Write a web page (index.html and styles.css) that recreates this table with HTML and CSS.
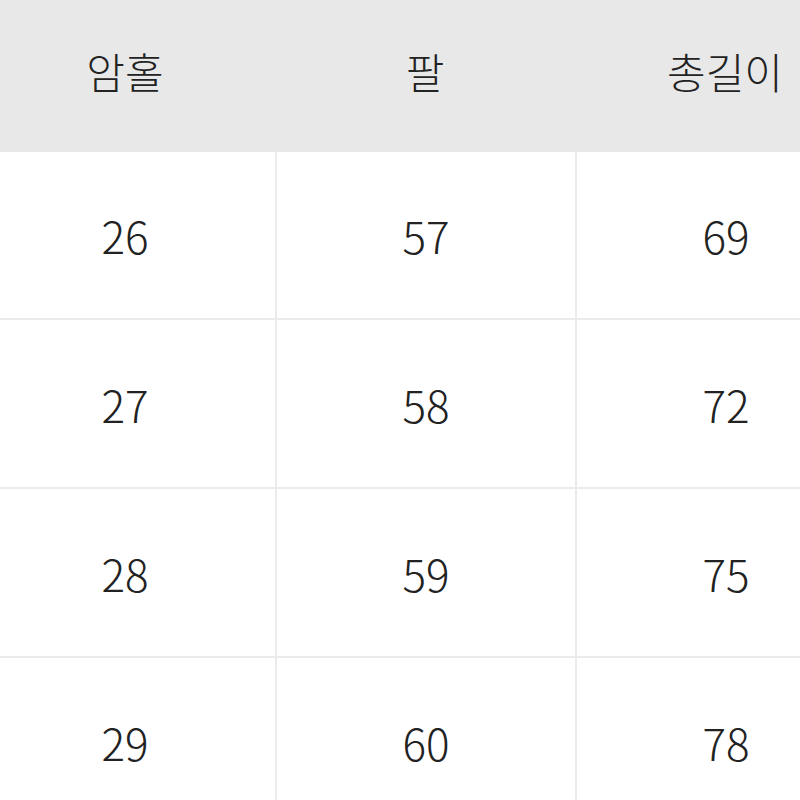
FILE: index.html
```html
<!DOCTYPE html>
<html lang="ko">
<head>
<meta charset="utf-8">
<link rel="stylesheet" href="styles.css">
</head>
<body>
<div class="frame">
<div class="table">
  <div class="row head">
    <div class="cell">암홀</div>
    <div class="cell">팔</div>
    <div class="cell">총길이</div>
  </div>
  <div class="row">
    <div class="cell">26</div>
    <div class="cell">57</div>
    <div class="cell">69</div>
  </div>
  <div class="row">
    <div class="cell">27</div>
    <div class="cell">58</div>
    <div class="cell">72</div>
  </div>
  <div class="row">
    <div class="cell">28</div>
    <div class="cell">59</div>
    <div class="cell">75</div>
  </div>
  <div class="row">
    <div class="cell">29</div>
    <div class="cell">60</div>
    <div class="cell">78</div>
  </div>
</div>
</div>
</body>
</html>
```

FILE: styles.css
```css
html, body {
  margin: 0;
  padding: 0;
  background: #ffffff;
}
.frame {
  width: 800px;
  height: 800px;
  overflow: hidden;
}
.table {
  margin-left: -25px;
  width: 900px;
  font-family: "Noto Sans CJK KR", "Noto Sans", sans-serif;
  color: #222222;
}
.row {
  display: grid;
  grid-template-columns: 300px 300px 300px;
  height: 169px;
  border-top: 2px solid #ebebeb;
  box-sizing: border-box;
}
.row.head {
  height: 152px;
  border-top: none;
  background: #e8e8e8;
}
.row.head + .row {
  border-top: none;
  height: 166px;
}
.cell {
  display: flex;
  align-items: center;
  justify-content: center;
  font-size: 44px;
  font-weight: 300;
  border-left: 2px solid #ebebeb;
}
.cell:first-child {
  border-left: none;
}
.head .cell {
  border-left: none;
  font-size: 42px;
  padding-bottom: 12px;
}
```
